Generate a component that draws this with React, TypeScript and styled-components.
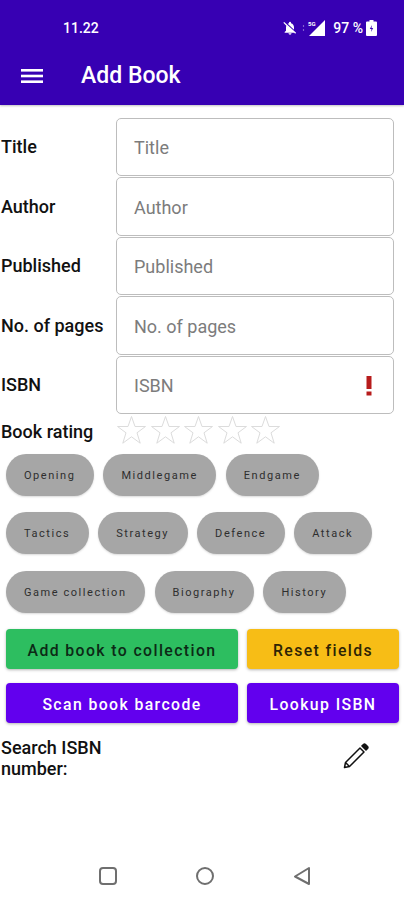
import { ReactElement } from 'react';
import styled, { createGlobalStyle } from 'styled-components';

const GlobalStyle = createGlobalStyle`
  html, body {
    margin: 0;
    padding: 0;
    background: #fff;
  }
  * {
    box-sizing: border-box;
  }
`;

const Screen = styled.div`
  width: 404px;
  height: 900px;
  display: flex;
  flex-direction: column;
  font-family: Roboto, "Liberation Sans", sans-serif;
  background: #fff;
  overflow: hidden;
`;

const Header = styled.header`
  height: 105px;
  flex: none;
  background: #3700b3;
  color: #fff;
  padding-top: 19px;
  box-shadow: 0 1px 2px rgba(0, 0, 0, 0.25);
`;

const StatusBar = styled.div`
  height: 18px;
  display: flex;
  align-items: center;
  padding: 0 27px 0 63px;
  font-size: 14px;
  font-weight: 500;
`;

const StatusIcons = styled.div`
  margin-left: auto;
  display: flex;
  align-items: center;
`;

const Percent = styled.span`
  margin: 0 3px 0 7px;
`;

const SignalSvg = styled.svg`
  margin-left: 4px;
`;

const AppBar = styled.div`
  display: flex;
  align-items: center;
  padding: 20px 0 0 21px;
`;

const AppTitle = styled.h1`
  margin: 0 0 0 38px;
  font-size: 23px;
  line-height: 38px;
  font-weight: 500;
`;

const Form = styled.main`
  flex: 1;
  display: flex;
  flex-direction: column;
  padding-top: 12px;
`;

const FieldRow = styled.div`
  height: 59.5px;
  display: flex;
  align-items: center;
  padding-right: 10px;
`;

const Label = styled.label`
  width: 116px;
  flex: none;
  padding-left: 1px;
  font-size: 18px;
  font-weight: 500;
  color: #111;
  white-space: nowrap;
`;

const InputBox = styled.div`
  flex: 1;
  height: 58.5px;
  display: flex;
  align-items: center;
  justify-content: space-between;
  padding: 2px 20px 0 17px;
  border: 1px solid #bdbdbd;
  border-radius: 5px;
  font-size: 18px;
  color: #7c7c7c;
`;

const RatingRow = styled.div`
  height: 34px;
  display: flex;
  align-items: center;
`;

const Stars = styled.div`
  display: flex;
  gap: 2.5px;
  margin-top: -3px;
`;

const ChipGroup = styled.div`
  display: flex;
  flex-direction: column;
  gap: 16.5px;
  padding: 5px 0 0 6px;
`;

const ChipRow = styled.div`
  display: flex;
  gap: 9.5px;
`;

const Chip = styled.div`
  height: 42px;
  display: flex;
  align-items: center;
  padding: 1px 18.5px 0 18px;
  background: #a6a6a6;
  border-radius: 20px / 21px;
  box-shadow: 0 1px 2px rgba(0, 0, 0, 0.15);
  font-size: 11px;
  font-weight: 400;
  letter-spacing: 1.55px;
  color: #2e2e2e;
  white-space: nowrap;
`;

const ButtonGrid = styled.div`
  display: grid;
  grid-template-columns: 232px 152px;
  grid-auto-rows: 40px;
  column-gap: 9px;
  row-gap: 14px;
  padding: 16px 0 0 6px;
`;

const ActionButton = styled.button<{ $bg: string; $fg: string }>`
  border: 0;
  border-radius: 4px;
  padding: 3px 0 0;
  background: ${(p) => p.$bg};
  color: ${(p) => p.$fg};
  font-family: inherit;
  font-size: 15.8px;
  font-weight: 500;
  letter-spacing: 1.4px;
  box-shadow: 0 1px 3px rgba(0, 0, 0, 0.3);
`;

const SearchRow = styled.div`
  display: flex;
  align-items: center;
  padding: 14px 34px 0 1px;
`;

const SearchLabel = styled.div`
  width: 125px;
  font-size: 18px;
  line-height: 21px;
  font-weight: 500;
  color: #111;
`;

const PencilWrap = styled.div`
  margin-left: auto;
  display: flex;
  margin-bottom: 2px;
  margin-right: 1px;
`;

const NavBar = styled.nav`
  height: 34px;
  flex: none;
  display: flex;
  align-items: flex-start;
  padding: 0 92px 0 98px;
  justify-content: space-between;
`;

const MenuIcon = (): ReactElement => (
  <svg width="22" height="16" viewBox="0 0 22 16" fill="#fff">
    <rect x="0" y="1" width="22" height="2.6" />
    <rect x="0" y="6.7" width="22" height="2.6" />
    <rect x="0" y="12.4" width="22" height="2.6" />
  </svg>
);

const BellOff = (): ReactElement => (
  <svg width="16" height="16" viewBox="0 0 24 24" fill="#fff">
    <path d="M12 22a2.5 2.5 0 0 0 2.4-2H9.6A2.5 2.5 0 0 0 12 22Z" />
    <path d="M18 14.5V11c0-3-1.7-5.6-4.5-6.3V4a1.5 1.5 0 0 0-3 0v.7c-.8.2-1.4.5-2 1L18 14.5Z" />
    <path d="M3.3 2.9 2 4.2l4.5 4.5A7 7 0 0 0 6 11v5l-2 2v1h14.3l1.5 1.5 1.3-1.3L3.3 2.9Z" />
  </svg>
);

const SignalIcon = (): ReactElement => (
  <SignalSvg width="24" height="16" viewBox="0 0 24 16" fill="#fff">
    <path d="M23 0v16H7L23 0Z" />
    <circle cx="1.5" cy="6" r=".7" opacity=".6" />
    <circle cx="1.5" cy="10" r=".7" opacity=".6" />
    <text x="6" y="6" fontSize="6" fontWeight="700" fontFamily="Roboto, sans-serif">5G</text>
  </SignalSvg>
);

const BatteryIcon = (): ReactElement => (
  <svg width="11" height="16" viewBox="0 0 11 16">
    <path d="M3.5 0h4v1.5H10a1 1 0 0 1 1 1V15a1 1 0 0 1-1 1H1a1 1 0 0 1-1-1V2.500a1 1 0 0 1 1-1h2.500V0Z" fill="#fff" />
    <path d="M6 5 3.800 9h1.700L5 12l2.200-4H5.500L6 5Z" fill="#3700b3" />
  </svg>
);

const Exclamation = (): ReactElement => (
  <svg width="8" height="22" viewBox="0 0 8 22" fill="#b71c1c">
    <rect x="1.500" y="1" width="5" height="13" />
    <rect x="1.500" y="16.500" width="5" height="4" />
  </svg>
);

const StarIcon = (): ReactElement => (
  <svg width="31" height="30" viewBox="0 0 31 30" fill="none" stroke="#dcdcdc" strokeWidth="1">
    <path d="M15.500 1.500 19 11.500h10.500l-8.500 6.300 3.200 10.400-8.700-6.400-8.700 6.400 3.200-10.400-8.500-6.300H12l3.500-10Z" />
  </svg>
);

const Pencil = (): ReactElement => (
  <svg width="28" height="28" viewBox="0 0 28 28" fill="none" stroke="#111" strokeWidth="1.500" strokeLinejoin="round">
    <path d="M4.500 19.500 19 5l4 4L8.500 23.500l-5 1 1-5Z" />
    <path d="M4.800 19.800 8.200 23.200" />
    <path d="M21 2.800 22.500 1.500a1.500 1.500 0 0 1 2 0l2 2a1.500 1.500 0 0 1 0 2L25 7l-4-4Z" fill="#111" />
  </svg>
);

const NavSquare = (): ReactElement => (
  <svg width="20" height="20" viewBox="0 0 20 20" fill="none" stroke="#6f6f6f" strokeWidth="2">
    <rect x="2" y="2" width="16" height="16" rx="3" />
  </svg>
);

const NavCircle = (): ReactElement => (
  <svg width="20" height="20" viewBox="0 0 20 20" fill="none" stroke="#6f6f6f" strokeWidth="2">
    <circle cx="10" cy="10" r="8" />
  </svg>
);

const NavBack = (): ReactElement => (
  <svg width="20" height="20" viewBox="0 0 20 20" fill="none" stroke="#6f6f6f" strokeWidth="2" strokeLinejoin="round">
    <path d="M17 2v16L3 10.500 17 2Z" />
  </svg>
);

const fields = ['Title', 'Author', 'Published', 'No. of pages', 'ISBN'];
const chipRows = [
  ['Opening', 'Middlegame', 'Endgame'],
  ['Tactics', 'Strategy', 'Defence', 'Attack'],
  ['Game collection', 'Biography', 'History'],
];

const App = (): ReactElement => {
  return (
    <Screen>
      <GlobalStyle />
      <Header>
        <StatusBar>
          11.22
          <StatusIcons>
            <BellOff />
            <SignalIcon />
            <Percent>97 %</Percent>
            <BatteryIcon />
          </StatusIcons>
        </StatusBar>
        <AppBar>
          <MenuIcon />
          <AppTitle>Add Book</AppTitle>
        </AppBar>
      </Header>
      <Form>
        {fields.map((field) => (
          <FieldRow key={field}>
            <Label>{field}</Label>
            <InputBox>
              {field}
              {field === 'ISBN' ? <Exclamation /> : null}
            </InputBox>
          </FieldRow>
        ))}
        <RatingRow>
          <Label>Book rating</Label>
          <Stars>
            {[0, 1, 2, 3, 4].map((i) => (
              <StarIcon key={i} />
            ))}
          </Stars>
        </RatingRow>
        <ChipGroup>
          {chipRows.map((row) => (
            <ChipRow key={row[0]}>
              {row.map((chip) => (
                <Chip key={chip}>{chip}</Chip>
              ))}
            </ChipRow>
          ))}
        </ChipGroup>
        <ButtonGrid>
          <ActionButton $bg="#2dbe60" $fg="#0c2a16">Add book to collection</ActionButton>
          <ActionButton $bg="#f7bd16" $fg="#2e2405">Reset fields</ActionButton>
          <ActionButton $bg="#6200ee" $fg="#fff">Scan book barcode</ActionButton>
          <ActionButton $bg="#6200ee" $fg="#fff">Lookup ISBN</ActionButton>
        </ButtonGrid>
        <SearchRow>
          <SearchLabel>Search ISBN number:</SearchLabel>
          <PencilWrap>
            <Pencil />
          </PencilWrap>
        </SearchRow>
      </Form>
      <NavBar>
        <NavSquare />
        <NavCircle />
        <NavBack />
      </NavBar>
    </Screen>
  );
};

export default App;
